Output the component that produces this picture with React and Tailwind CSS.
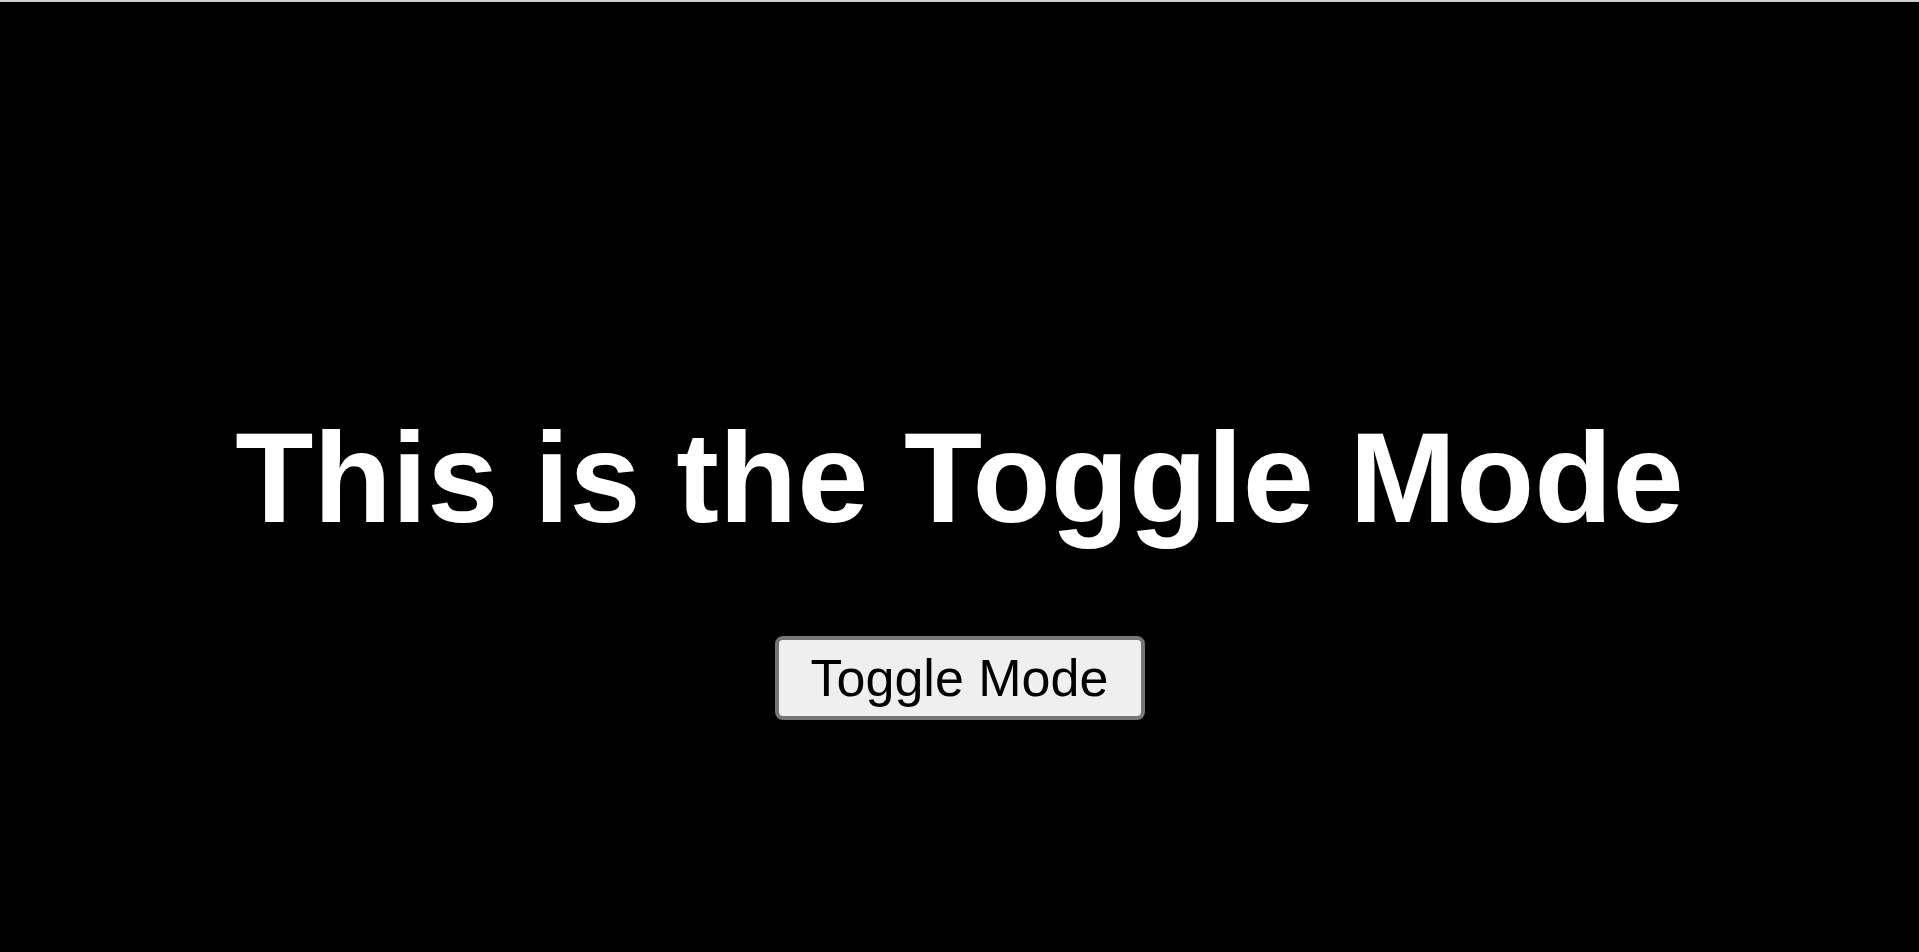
import React, { useState } from "react";

export default function App() {
  const [dark, setDark] = useState(true);

  return (
    <div
      className={`min-h-screen border-t-2 border-[#cfcfcf] flex flex-col items-center pt-[412px] ${
        dark ? "bg-black text-white" : "bg-white text-black"
      }`}
      style={{ fontFamily: '"Liberation Sans", Arial, sans-serif' }}
    >
      <h1 className="text-[128px] leading-none font-bold">This is the Toggle Mode</h1>
      <button
        className="mt-[94px] w-[370px] h-[84px] bg-[#efefef] text-black border-4 border-[#767676] rounded-lg text-[52px] leading-[60px] flex items-center justify-center"
        onClick={() => setDark(!dark)}
      >
        Toggle Mode
      </button>
    </div>
  );
}
